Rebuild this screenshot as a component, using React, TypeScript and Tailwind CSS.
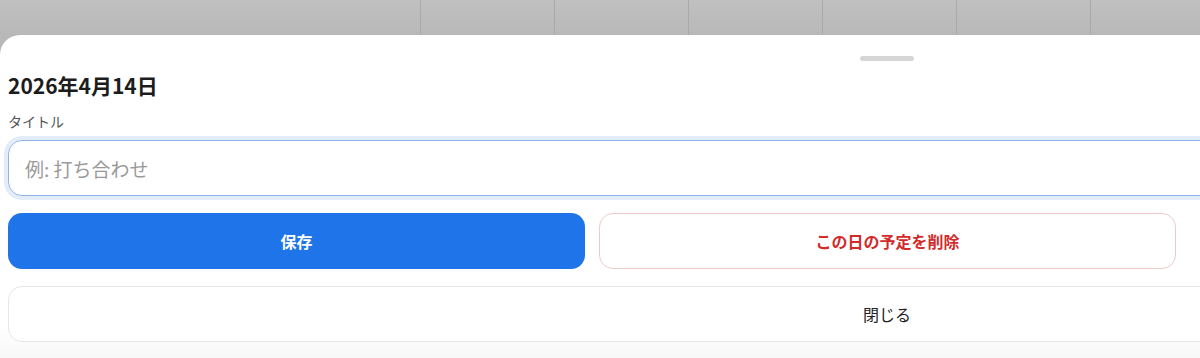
const font = { fontFamily: '"Noto Sans CJK JP", "Noto Sans", sans-serif' };

const calendarCols = [0, 1, 2, 3, 4, 5, 6, 7];

export default function App() {
  return (
    <div
      className="w-[1200px] h-[358px] overflow-hidden bg-white flex flex-col"
      style={font}
    >
      {/* dimmed calendar behind the sheet */}
      <div className="h-[35px] shrink-0 flex bg-gradient-to-b from-[#c0c0c0] to-[#b8b8b8]">
        <div className="w-[420px] shrink-0" />
        {calendarCols.map((c) => (
          <div key={c} className="w-[134px] shrink-0 border-l border-[#a9a9a9]" />
        ))}
      </div>

      {/* bottom sheet */}
      <div className="flex-1 w-[1200px] overflow-hidden bg-[#b8b8b8]">
        <div className="w-[1774px] h-full bg-gradient-to-b from-white from-90% to-[#f7f7f7] rounded-tl-[20px] rounded-tr-[20px] px-2 flex flex-col">
          <div className="mt-[21px] mx-auto h-[5px] w-[54px] rounded-full bg-[#d6d6d6]" />

          <h2 className="mt-[10px] text-[21px] leading-[28px] font-bold text-[#1c1c1c]">
            2026年4月14日
          </h2>

          <label className="mt-[12px] text-[14px] leading-[20px] text-[#555]">
            タイトル
          </label>

          <input
            className="mt-[9px] h-[56px] w-full rounded-[14px] border border-[#8fb2e8] ring-4 ring-[#e3ecfb] px-4 text-[19px] text-[#222] placeholder:text-[#9a9a9a] outline-none"
            placeholder="例: 打ち合わせ"
            style={font}
          />

          <div className="mt-[17px] w-[1168px] grid grid-cols-2 gap-[14px]">
            <button className="h-[56px] rounded-[14px] bg-[#1e74e8] text-white text-[16px] font-bold">
              保存
            </button>
            <button className="h-[56px] rounded-[14px] border border-[#f0c9c9] bg-white text-[#d22b2b] text-[16px] font-bold">
              この日の予定を削除
            </button>
          </div>

          <button className="mt-[17px] h-[56px] w-full rounded-[14px] border border-[#e6e6e6] bg-white text-[#222] text-[16px]">
            閉じる
          </button>
        </div>
      </div>
    </div>
  );
}
